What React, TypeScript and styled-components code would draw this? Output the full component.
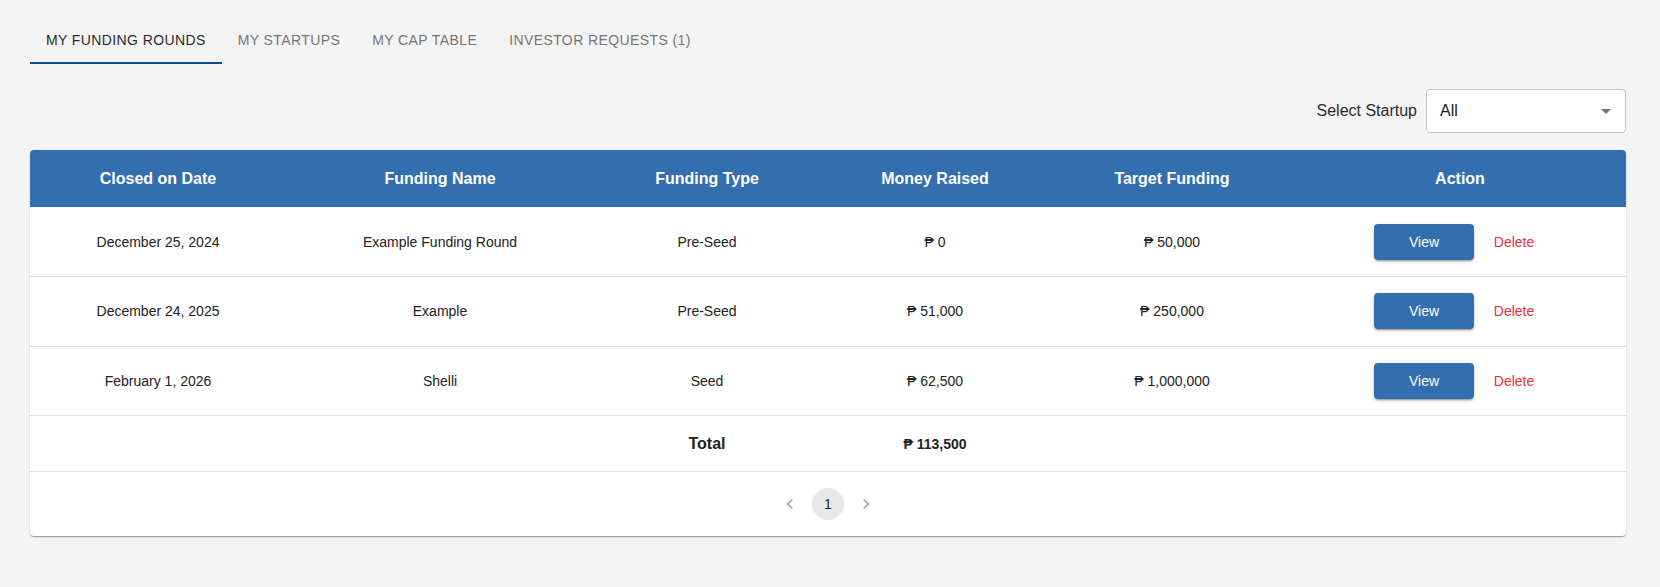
import React, { useState } from 'react'
import styled, { createGlobalStyle } from 'styled-components'

interface IFundingRound {
    id: number
    closedOn: string
    name: string
    type: string
    raised: string
    target: string
}

const rounds: IFundingRound[] = [
    { id: 1, closedOn: 'December 25, 2024', name: 'Example Funding Round', type: 'Pre-Seed', raised: '₱ 0', target: '₱ 50,000' },
    { id: 2, closedOn: 'December 24, 2025', name: 'Example', type: 'Pre-Seed', raised: '₱ 51,000', target: '₱ 250,000' },
    { id: 3, closedOn: 'February 1, 2026', name: 'Shelli', type: 'Seed', raised: '₱ 62,500', target: '₱ 1,000,000' },
]

const tabs = ['My Funding Rounds', 'My Startups', 'My Cap Table', 'Investor Requests (1)']

const columns = [
    { label: 'Closed on Date', width: 256 },
    { label: 'Funding Name', width: 308 },
    { label: 'Funding Type', width: 226 },
    { label: 'Money Raised', width: 230 },
    { label: 'Target Funding', width: 244 },
    { label: 'Action', width: 332 },
]

const App = () => {
    const [activeTab, setActiveTab] = useState(0)

    return (
        <>
            <GlobalStyle />
            <Page>
                <TabBar>
                    {tabs.map((tab, i) => (
                        <Tab key={tab} active={i === activeTab} onClick={() => setActiveTab(i)}>
                            {tab}
                        </Tab>
                    ))}
                </TabBar>

                <FilterRow>
                    <FilterLabel>Select Startup</FilterLabel>
                    <SelectBox>
                        <span>All</span>
                        <svg width="24" height="24" viewBox="0 0 24 24">
                            <path d="M7 10l5 5 5-5z" fill="#757575" />
                        </svg>
                    </SelectBox>
                </FilterRow>

                <Card>
                    <Table>
                        <colgroup>
                            {columns.map(col => <col key={col.label} style={{ width: col.width }} />)}
                        </colgroup>
                        <thead>
                            <tr>
                                {columns.map(col => <HeadCell key={col.label}>{col.label}</HeadCell>)}
                            </tr>
                        </thead>
                        <tbody>
                            {rounds.map(round => (
                                <BodyRow key={round.id}>
                                    <Cell>{round.closedOn}</Cell>
                                    <Cell>{round.name}</Cell>
                                    <Cell>{round.type}</Cell>
                                    <Cell>{round.raised}</Cell>
                                    <Cell>{round.target}</Cell>
                                    <Cell>
                                        <Actions>
                                            <ViewButton>View</ViewButton>
                                            <DeleteButton>Delete</DeleteButton>
                                        </Actions>
                                    </Cell>
                                </BodyRow>
                            ))}
                            <TotalRow>
                                <TotalCell />
                                <TotalCell />
                                <TotalCell big>Total</TotalCell>
                                <TotalCell>₱ 113,500</TotalCell>
                                <TotalCell />
                                <TotalCell />
                            </TotalRow>
                        </tbody>
                    </Table>

                    <Pagination>
                        <PageArrow disabled>
                            <svg width="20" height="20" viewBox="0 0 24 24">
                                <path d="M15.41 7.41 14 6l-6 6 6 6 1.41-1.41L10.83 12z" />
                            </svg>
                        </PageArrow>
                        <PageNumber>1</PageNumber>
                        <PageArrow disabled>
                            <svg width="20" height="20" viewBox="0 0 24 24">
                                <path d="M10 6 8.59 7.41 13.17 12l-4.58 4.59L10 18l6-6z" />
                            </svg>
                        </PageArrow>
                    </Pagination>
                </Card>
            </Page>
        </>
    )
}

const GlobalStyle = createGlobalStyle`
    body {
        margin: 0;
        background: #f4f4f4;
        font-family: "Liberation Sans", Arial, "DejaVu Sans", sans-serif;
    }
`

const Page = styled.div`
    padding: 16px 34px 40px 30px;
`

const TabBar = styled.div`
    display: flex;
    height: 48px;
`

const Tab = styled.div<{ active: boolean }>`
    padding: 2px 16px 0;
    display: flex;
    align-items: center;
    font-size: 14px;
    letter-spacing: 0.4px;
    text-transform: uppercase;
    color: ${p => (p.active ? '#2b2b2b' : '#767676')};
    border-bottom: 2px solid ${p => (p.active ? '#0f4a9c' : 'transparent')};
    box-sizing: border-box;
    cursor: pointer;
`

const FilterRow = styled.div`
    display: flex;
    justify-content: flex-end;
    align-items: center;
    gap: 9px;
    margin-top: 25px;
`

const FilterLabel = styled.span`
    font-size: 16px;
    color: #2b2b2b;
`

const SelectBox = styled.div`
    width: 200px;
    height: 44px;
    box-sizing: border-box;
    background: #fff;
    border: 1px solid #c4c4c4;
    border-radius: 4px;
    display: flex;
    align-items: center;
    justify-content: space-between;
    padding: 0 7px 0 13px;
    font-size: 16px;
    color: #222;
`

const Card = styled.div`
    margin-top: 17px;
    background: #fff;
    border-radius: 4px;
    overflow: hidden;
    box-shadow: 0 2px 1px -1px rgba(0, 0, 0, 0.2), 0 1px 1px 0 rgba(0, 0, 0, 0.14), 0 1px 3px 0 rgba(0, 0, 0, 0.12);
`

const Table = styled.table`
    width: 100%;
    table-layout: fixed;
    border-collapse: collapse;
`

const HeadCell = styled.th`
    height: 57px;
    padding: 0;
    background: #336eaf;
    color: #fff;
    font-size: 16px;
    font-weight: 700;
    text-align: center;
`

const BodyRow = styled.tr`
    height: 69.5px;
    border-bottom: 1px solid #e0e0e0;
`

const TotalRow = styled.tr`
    height: 56px;
    border-bottom: 1px solid #e0e0e0;
`

const Cell = styled.td`
    padding: 0;
    text-align: center;
    font-size: 14px;
    color: #222;
`

const TotalCell = styled.td<{ big?: boolean }>`
    padding: 0;
    text-align: center;
    font-weight: 700;
    font-size: ${p => (p.big ? '16px' : '14px')};
    color: #222;
`

const Actions = styled.div`
    display: flex;
    justify-content: center;
    align-items: center;
    gap: 8px;
`

const ViewButton = styled.button`
    width: 100px;
    height: 36px;
    border: none;
    border-radius: 4px;
    background: #336eaf;
    color: #fff;
    font-family: inherit;
    font-size: 14px;
    cursor: pointer;
    box-shadow: 0 3px 1px -2px rgba(0, 0, 0, 0.2), 0 2px 2px 0 rgba(0, 0, 0, 0.14), 0 1px 5px 0 rgba(0, 0, 0, 0.12);
`

const DeleteButton = styled.button`
    min-width: 64px;
    height: 36px;
    padding: 6px 8px;
    border: none;
    background: transparent;
    color: #f0303c;
    font-family: inherit;
    font-size: 14px;
    cursor: pointer;
`

const Pagination = styled.div`
    height: 64px;
    display: flex;
    justify-content: center;
    align-items: center;
    gap: 6px;
`

const PageArrow = styled.button`
    width: 32px;
    height: 32px;
    border: none;
    background: transparent;
    padding: 0;
    display: flex;
    align-items: center;
    justify-content: center;
    fill: #a8a8a8;
`

const PageNumber = styled.div`
    width: 32px;
    height: 32px;
    border-radius: 50%;
    background: #e8e8e8;
    display: flex;
    align-items: center;
    justify-content: center;
    font-size: 14px;
    color: #222;
`

export default App
